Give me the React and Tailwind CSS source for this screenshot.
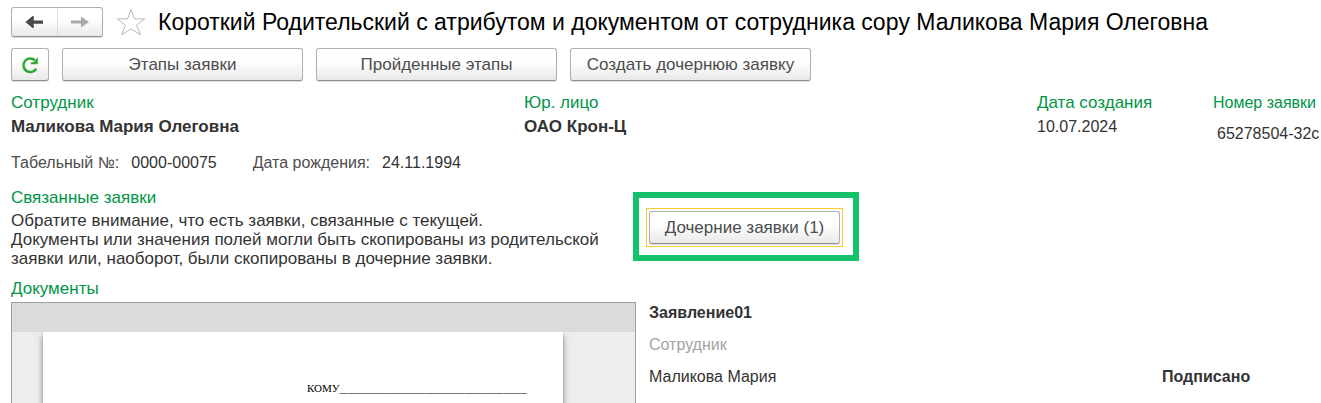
import React from "react";

const raised =
  "rounded-[3px] border border-[#b0b0b0] border-b-[#8e8e8e] bg-linear-to-b from-white from-40% to-[#e9e9e9] shadow-[0_1px_1px_rgba(0,0,0,0.15)]";

function ActionButton({ children, className = "w-[241px]" }) {
  return (
    <button type="button" className={`${raised} ${className} h-[33px] text-center text-[17px] leading-5 text-[#4d4d4d]`}>
      {children}
    </button>
  );
}

function Heading({ children, className = "text-[17px]" }) {
  return <h2 className={`${className} leading-5 text-[#009646]`}>{children}</h2>;
}

function Arrow({ flip }) {
  return (
    <svg viewBox="0 0 18 14" className="h-[14px] w-[18px]" aria-hidden="true">
      <path
        d={flip ? "M0 5.6h10V1.6L18 7l-8 5.4V8.6H0z" : "M18 5.4H8.6L9 1.4 7.6 1 .4 7l7.2 6L9 12.6 8.6 8.8H18z"}
        fill="currentColor"
      />
    </svg>
  );
}

function Toolbar() {
  return (
    <header>
      <div className="flex items-center pt-[7px]">
        <div className={`${raised} flex h-[30px] w-[92px] shrink-0`}>
          <button type="button" aria-label="Назад" className="flex flex-1 items-center justify-center border-r border-[#dcdcdc] text-[#4a4a4a]">
            <Arrow />
          </button>
          <button type="button" aria-label="Вперед" className="flex flex-1 items-center justify-center text-[#a9a9a9]">
            <Arrow flip />
          </button>
        </div>
        <button type="button" aria-label="В избранное" className="ml-[13px] shrink-0">
          <svg viewBox="0 0 30 28" className="h-7 w-[30px]" fill="none" stroke="#b4bac2" strokeWidth="1" aria-hidden="true">
            <path d="M15 1.5l3.4 9.4h10.3l-8.2 6.2 3.9 9.7L15 20.9l-9.4 5.9 3.9-9.7-8.2-6.2h10.3z" />
          </svg>
        </button>
        <h1 className="ml-3 text-[23px] leading-7 whitespace-nowrap text-black">
          Короткий Родительский с атрибутом и документом от сотрудника copy Маликова Мария Олеговна
        </h1>
      </div>
      <div className="mt-[11px] flex gap-[13px]">
        <button type="button" aria-label="Обновить" className={`${raised} flex h-[33px] w-[38px] items-center justify-center`}>
          <svg viewBox="0 0 18 18" className="h-[18px] w-[18px]" fill="none" aria-hidden="true">
            <path d="M14 4.4A6.8 6.8 0 1 0 15.2 12.6" stroke="#2fa836" strokeWidth="2.5" />
            <path d="M16.8 1v7.2H9.8V6.4l3.6-.6z" fill="#2fa836" />
          </svg>
        </button>
        <ActionButton>Этапы заявки</ActionButton>
        <ActionButton>Пройденные этапы</ActionButton>
        <ActionButton>Создать дочернюю заявку</ActionButton>
      </div>
    </header>
  );
}

function Summary() {
  return (
    <section>
      <div className="mt-3 grid grid-cols-[1fr_1fr_176px_108px]">
        <div>
          <Heading>Сотрудник</Heading>
          <p className="mt-1 text-[17px] leading-5 font-bold">Маликова Мария Олеговна</p>
        </div>
        <div>
          <Heading>Юр. лицо</Heading>
          <p className="mt-1 text-[17px] leading-5 font-bold">ОАО Крон-Ц</p>
        </div>
        <div>
          <Heading>Дата создания</Heading>
          <p className="mt-1 leading-5">10.07.2024</p>
        </div>
        <div className="whitespace-nowrap">
          <Heading className="text-base">Номер заявки</Heading>
          <p className="mt-[11px] pl-1 leading-5">65278504-32c</p>
        </div>
      </div>
      <dl className="mt-[9px] flex leading-5">
        <dt className="text-[#4d4d4d]">Табельный №:</dt>
        <dd className="ml-3">0000-00075</dd>
        <dt className="ml-9 text-[#4d4d4d]">Дата рождения:</dt>
        <dd className="ml-3">24.11.1994</dd>
      </dl>
    </section>
  );
}

function RelatedRequests() {
  return (
    <section className="mt-[15px] grid grid-cols-[638fr_672fr]">
      <div>
        <Heading>Связанные заявки</Heading>
        <p className="mt-[3px] text-[17px] leading-[19px]">
          Обратите внимание, что есть заявки, связанные с текущей.
          <br />
          Документы или значения полей могли быть скопированы из родительской
          <br />
          заявки или, наоборот, были скопированы в дочерние заявки.
        </p>
      </div>
      <div className="pt-[23px]">
        <div className="relative w-fit">
          <div className="pointer-events-none absolute -top-[19px] -right-[19px] -bottom-[17px] -left-4 border-6 border-[#13c26b]" />
          <div className="pointer-events-none absolute -inset-[3px] border border-[#fccb2e]" />
          <ActionButton className="block w-[191px]">Дочерние заявки (1)</ActionButton>
        </div>
      </div>
    </section>
  );
}

function Documents() {
  return (
    <section className="mt-[11px]">
      <Heading>Документы</Heading>
      <div className="mt-[3px] grid grid-cols-[638fr_672fr]">
        <div className="mr-[13px] border border-b-0 border-[#a0a0a0] bg-[#ededed]">
          <div className="h-[29px] bg-[#dbdbdb]" />
          <div className="overflow-hidden pr-[72px] pl-[31px]">
            <div className="h-[72px] bg-white pt-[49px] pl-[264px] font-['Liberation_Serif',serif] text-[11px] leading-[14px] whitespace-nowrap text-black shadow-[0_4px_6px_rgba(0,0,0,0.5)]">
              КОМУ
              <span className="font-['Liberation_Mono',monospace] text-[13px] font-bold">________________________</span>
            </div>
          </div>
        </div>
        <div className="pt-px">
          <h3 className="leading-5 font-bold">Заявление01</h3>
          <p className="mt-3 leading-5 text-[#a3a3a3]">Сотрудник</p>
          <div className="mt-3 grid grid-cols-[513fr_159fr] leading-5">
            <p>Маликова Мария</p>
            <p className="font-bold">Подписано</p>
          </div>
        </div>
      </div>
    </section>
  );
}

export default function App() {
  return (
    <main className="overflow-hidden bg-white pl-[11px] font-['Liberation_Sans',Arial,sans-serif] text-base text-[#333]">
      <Toolbar />
      <Summary />
      <RelatedRequests />
      <Documents />
    </main>
  );
}
